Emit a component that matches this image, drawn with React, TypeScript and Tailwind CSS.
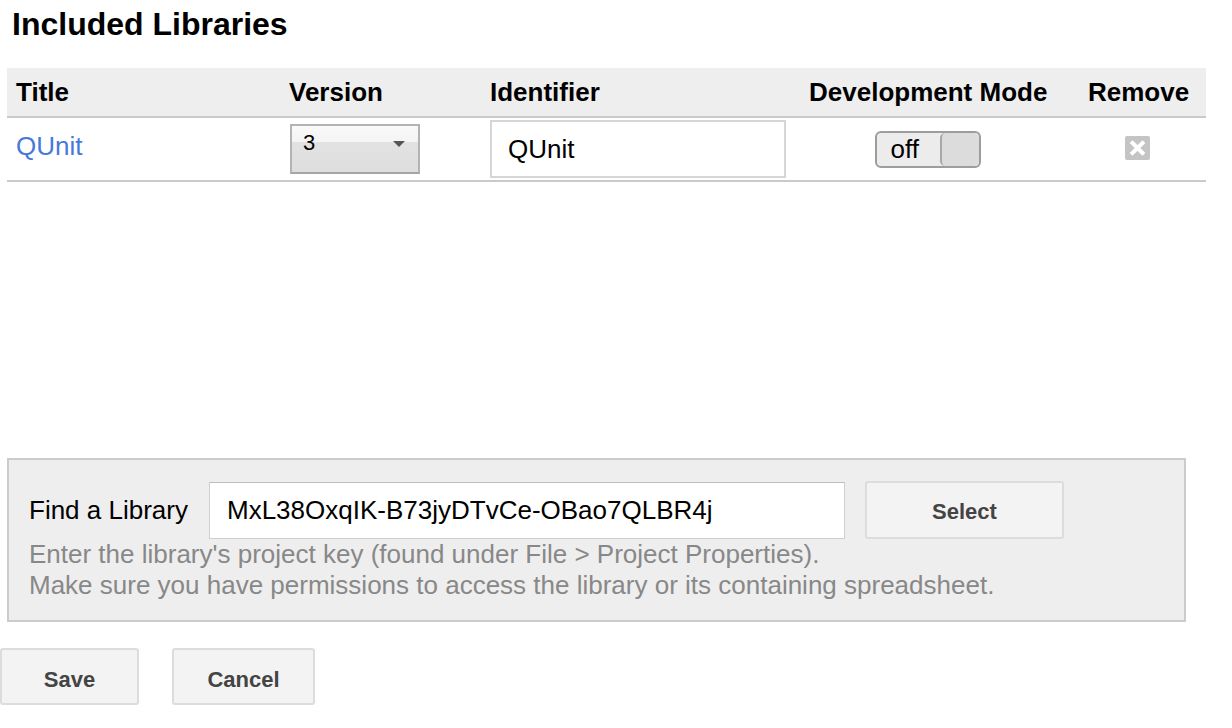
import React from "react";

const font = "font-['Liberation_Sans',Arial,Helvetica,sans-serif]";

function VersionSelect() {
  return (
    <div className="ml-px relative w-[130px] h-[50px] border-2 border-[#b3b3b3] border-b-[#a5a5a5] bg-[linear-gradient(to_bottom,#f9f9f9_0%,#f4f4f4_34%,#e2e2e2_35%,#dedede_100%)]">
      <span className="absolute left-[11px] top-[4px] text-[22px] leading-[26px] text-black">3</span>
      <svg className="absolute left-[101px] top-[15px]" width="12" height="6" viewBox="0 0 12 6">
        <polygon points="0,0 12,0 6,6" fill="#555" />
      </svg>
    </div>
  );
}

function Toggle() {
  return (
    <div className="flex w-[106px] h-[37px] rounded-[6px] border-2 border-[#9d9d9d] bg-[#ececec] overflow-hidden">
      <div className="flex-1 flex items-center pl-[14px] text-[26px] leading-none text-black">off</div>
      <div className="w-[39px] h-full rounded-[5px] border-l-2 border-[#a8a8a8] bg-[#dcdcdc]" />
    </div>
  );
}

function RemoveIcon() {
  return (
    <svg width="25" height="24" viewBox="0 0 25 24">
      <rect x="0" y="0" width="25" height="24" rx="2" fill="#c4c4c4" />
      <path d="M7.5 7 L17.5 17 M17.5 7 L7.5 17" stroke="#fff" strokeWidth="4" strokeLinecap="square" />
    </svg>
  );
}

export default function App() {
  return (
    <div className={`${font} bg-white w-[1232px] h-[728px] overflow-hidden text-black`}>
      {/* Heading */}
      <h1 className="ml-[12px] mt-[8px] text-[32px] leading-[32px] font-bold">Included Libraries</h1>

      {/* Libraries table */}
      <div className="ml-[7px] mt-[28px] w-[1199px]">
        <div className="grid grid-cols-[273px_201px_319px_279px_127px] h-[48px] bg-[#eeeeee] border-b-2 border-[#cacaca] box-content text-[26px] font-bold">
          <div className="flex items-center pl-[9px]">Title</div>
          <div className="flex items-center pl-[9px]">Version</div>
          <div className="flex items-center pl-[9px]">Identifier</div>
          <div className="flex items-center pl-[9px]">Development Mode</div>
          <div className="flex items-center pl-[9px]">Remove</div>
        </div>
        <div className="grid grid-cols-[273px_201px_319px_279px_127px] h-[62px] border-b-2 border-[#cacaca] box-content text-[26px]">
          <div className="flex items-center pl-[9px] pb-[5px]">
            <a className="text-[#4679dc]">QUnit</a>
          </div>
          <div className="flex items-center pl-[9px]">
            <VersionSelect />
          </div>
          <div className="flex items-center pl-[9px]">
            <div className="w-[296px] h-[58px] border-2 border-[#d6d6d6] flex items-center pl-[16px]">QUnit</div>
          </div>
          <div className="flex items-center pl-[9px]">
            <div className="w-[237px] flex justify-center">
              <Toggle />
            </div>
          </div>
          <div className="flex items-center pl-[9px] pb-[3px]">
            <div className="w-[99px] flex justify-center">
              <RemoveIcon />
            </div>
          </div>
        </div>
      </div>

      {/* Find a library */}
      <div className="ml-[7px] mt-[276px] w-[1179px] h-[164px] border-2 border-[#cccccc] bg-[#eeeeee] px-[20px] pt-[21px]">
        <div className="flex items-center">
          <span className="text-[26px] w-[180px]">Find a Library</span>
          <div className="w-[636px] h-[57px] bg-white border border-[#cfcfcf] border-t-[#bdbdbd] flex items-center pl-[17px] text-[26px]">
            MxL38OxqIK-B73jyDTvCe-OBao7QLBR4j
          </div>
          <button className="ml-[20px] w-[199px] h-[58px] pt-[2px] rounded-[3px] border-2 border-[#dcdcdc] bg-[#f3f3f3] text-[22px] font-bold text-[#444]">
            Select
          </button>
        </div>
        <div className="text-[26px] leading-[31px] text-[#888888]">
          <p>Enter the library's project key (found under File &gt; Project Properties).</p>
          <p>Make sure you have permissions to access the library or its containing spreadsheet.</p>
        </div>
      </div>

      {/* Actions */}
      <div className="flex gap-[33px] mt-[26px]">
        <button className="w-[139px] h-[57px] pt-[5px] rounded-[3px] border-2 border-[#dcdcdc] bg-[#f3f3f3] text-[22px] font-bold text-[#444]">
          Save
        </button>
        <button className="w-[143px] h-[57px] pt-[5px] rounded-[3px] border-2 border-[#dcdcdc] bg-[#f3f3f3] text-[22px] font-bold text-[#444]">
          Cancel
        </button>
      </div>
    </div>
  );
}
